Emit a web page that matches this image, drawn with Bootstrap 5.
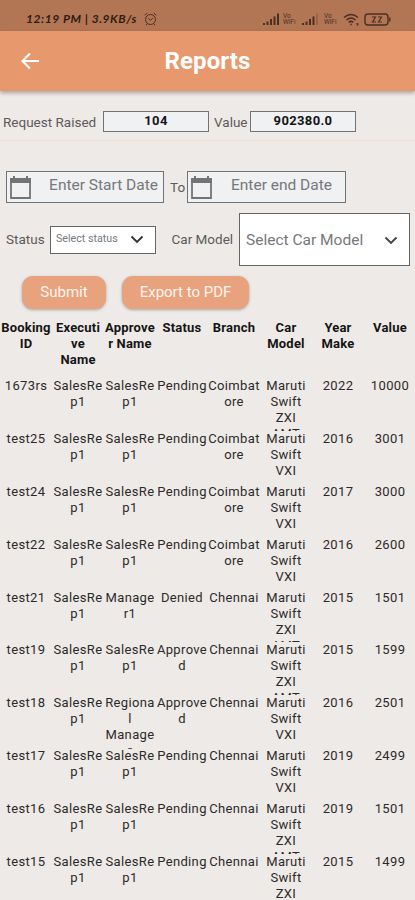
<!DOCTYPE html>
<html lang="en">
<head>
<meta charset="utf-8">
<meta name="viewport" content="width=device-width, initial-scale=1">
<title>Reports</title>
<link href="https://cdn.jsdelivr.net/npm/bootstrap@5.3.0/dist/css/bootstrap.min.css" rel="stylesheet">
<style>
body{font-family:Roboto,"Liberation Sans",sans-serif;background:#eeeae7;color:#2c2a29;overflow:hidden;height:900px}
svg{display:block;flex:none}
.statusbar{height:31px;background:#b27655;color:#4a3022;padding:7px 24px 0 26px}
.clock{font:italic 700 12px/24px Lato,sans-serif;letter-spacing:.55px;color:#2f1c13;white-space:pre;width:117px}
.vo{font-size:6.5px;line-height:6.5px;font-weight:400;width:13px}
.appbar{height:60px;background:#e8986d;box-shadow:0 2px 4px rgba(0,0,0,.3);padding-left:21px}
.appbar h1{font-size:24px;letter-spacing:.1px;padding-right:41px}
.summary{height:50px;padding:20px 0 0 3px;border-bottom:1px solid #eeddd6}
.lbl{font-size:13.5px;color:#5d5a59;white-space:nowrap}
.box{border:1px solid #707376;background:#f0f1f2}
.num{width:106px;height:21px;font-size:13px;line-height:18px;color:#151515;letter-spacing:.35px}
.dates{height:32px;margin-top:30px;padding-left:6px}
.datebox{height:32px;color:#77787a;font-size:15.5px;padding:0 5px 0 1px}
.datebox span{padding-bottom:3px}
.filters{height:53px;margin-top:10px;padding-left:6px}
.sel{border:1px solid #656565;background:#fff;color:#77787a}
.pill{height:33px;border-radius:11px;background:#e9a27e;color:#fff6f0;font-size:15px;border:0;box-shadow:0 1px 3px rgba(0,0,0,.3);padding:0}
.line{width:416px;height:52.9px;font-size:13px;line-height:16px;text-align:center;letter-spacing:.35px}
.line>div{width:52px;height:52.9px;overflow:hidden;flex:none;display:flex;justify-content:center;white-space:nowrap}
.line>div.tall{height:53.7px}
.heads{height:58px;font-weight:700;color:#151515;letter-spacing:.2px}
.reqlbl{width:100px;padding-top:1px}.vallbl{width:41px;padding:1px 0 0 5px}
.tolbl{width:23px;padding-left:6px}
.stlbl{width:44px}.carlbl{width:83px;padding-left:15.5px}
.startbox{width:158px}.endbox{width:159px;padding-right:13px}
.selstatus{width:106px;height:28px;font-size:10.7px;padding:0 11px 0 5px}
.selcar{width:171px;height:53px;font-size:15.5px;padding:2px 11px 0 6px}
.actions{padding:10px 0 11px 22px;gap:16px}
.wsub{width:84px}.wpdf{width:127px}
.heads>div{height:58px}
</style>
<script src="https://cdn.jsdelivr.net/npm/bootstrap@5.3.0/dist/js/bootstrap.bundle.min.js"></script>
</head>
<body>
<div class="statusbar d-flex align-items-center justify-content-between">
  <div class="d-flex align-items-center"><span class="clock">12:19 PM | 3.9KB/s</span>
    <svg class="ms-0" width="15" height="14" viewBox="0 0 13 14" fill="none" stroke="#4a3022"><circle cx="6.5" cy="7.5" r="5"/><path d="M.8 3.2 3.3 1M12.2 3.2 9.7 1M4.3 6.2l2.2 2 2.3-2M3 12l-1 1.3M10 12l1 1.3"/></svg>
  </div>
  <div class="d-flex align-items-center">
    <svg width="16" height="12" viewBox="0 0 16 12" fill="#4a3022"><path d="M0 10h2v2H0zM3.500 8.500h2V12h-2zM7 6h2v6H7zM10.500 3.500h2V12h-2zM14 .5h2V12h-2z"/></svg>
    <div class="vo ms-1">Vo<br>WiFi</div>
    <svg style="margin-left:6px" width="16" height="12" viewBox="0 0 16 12" fill="#4a3022"><path d="M0 10h2v2H0zM3.500 8.500h2V12h-2zM7 6h2v6H7zM10.500 3.500h2V12h-2z"/><path opacity=".25" d="M14 .5h2V12h-2z"/></svg>
    <div class="vo" style="margin-left:6px">Vo<br>WiFi</div>
    <svg style="margin-left:6px" width="17" height="13" viewBox="0 0 17 13" fill="none" stroke="#4a3022" stroke-width="1.600"><path d="M1 4.500q7-6 14 0M3.500 7q4.500-4 9 0M5.800 9.300q2.200-2 4.400 0"/><path d="M7.300 11.500h1.400M14.500 10v2.500"/></svg>
    <svg class="ms-1" width="27" height="13" viewBox="0 0 27 13" fill="none" stroke="#4a3022" stroke-width="1.400"><rect x="1" y="1" width="23" height="11" rx="3"/><path d="M25.800 4.500v4"/><path stroke-width="1.200" d="M8 4h3.500L8.500 9H12M14 4h3.500l-3 5H18"/></svg>
  </div>
</div>
<header class="appbar d-flex align-items-center position-relative">
  <svg width="20" height="18" viewBox="0 0 20 18" fill="none" stroke="#fff" stroke-width="2.100"><path d="M9 1.500 1.500 9 9 16.500M1.500 9H18"/></svg>
  <h1 class="m-0 flex-fill text-center text-white fw-bold">Reports</h1>
</header>
<section class="summary d-flex">
  <span class="lbl reqlbl">Request Raised</span><div class="box num fw-bold text-center">104</div>
  <span class="lbl vallbl">Value</span><div class="box num fw-bold text-center">902380.0</div>
</section>
<section class="dates d-flex align-items-center">
  <div class="box datebox startbox d-flex align-items-center justify-content-between">
    <svg width="24" height="26" viewBox="0 0 24 26"><path fill="none" stroke="#737476" stroke-width="1.800" d="M3 5h19v19H3z"/><path fill="#737476" d="M2 4h21v5H2zM5 2h2v4H5zM18 2h2v4h-2z"/></svg>
    <span>Enter Start Date</span></div>
  <span class="lbl tolbl">To</span>
  <div class="box datebox endbox d-flex align-items-center justify-content-between">
    <svg width="24" height="26" viewBox="0 0 24 26"><path fill="none" stroke="#737476" stroke-width="1.800" d="M3 5h19v19H3z"/><path fill="#737476" d="M2 4h21v5H2zM5 2h2v4H5zM18 2h2v4h-2z"/></svg>
    <span>Enter end Date</span></div>
</section>
<section class="filters d-flex align-items-center">
  <span class="lbl stlbl">Status</span>
  <div class="sel selstatus d-flex align-items-center justify-content-between"><span>Select status</span>
    <svg width="14" height="9" viewBox="0 0 14 9" fill="none" stroke="#333" stroke-width="1.900"><path d="m1.500 1.500 5.500 5.500 5.500-5.500"/></svg></div>
  <span class="lbl carlbl">Car Model</span>
  <div class="sel selcar d-flex align-items-center justify-content-between"><span>Select Car Model</span>
    <svg width="14" height="9" viewBox="0 0 14 9" fill="none" stroke="#444" stroke-width="1.900"><path d="m1.500 1.500 5.500 5.500 5.500-5.500"/></svg></div>
</section>
<div class="actions d-flex">
  <button class="pill wsub">Submit</button><button class="pill wpdf">Export to PDF</button>
</div>
<main>
<div class="line heads d-flex"><div>Booking<br>ID</div><div class="tall">Executi<br>ve<br>Name</div><div>Approve<br>r Name</div><div>Status</div><div>Branch</div><div>Car<br>Model</div><div>Year<br>Make</div><div>Value</div></div>
<div class="line d-flex"><div>1673rs</div><div>SalesRe<br>p1</div><div>SalesRe<br>p1</div><div>Pending</div><div>Coimbat<br>ore</div><div>Maruti<br>Swift<br>ZXI<br>AMT</div><div>2022</div><div>10000</div></div>
<div class="line d-flex"><div>test25</div><div>SalesRe<br>p1</div><div>SalesRe<br>p1</div><div>Pending</div><div>Coimbat<br>ore</div><div>Maruti<br>Swift<br>VXI</div><div>2016</div><div>3001</div></div>
<div class="line d-flex"><div>test24</div><div>SalesRe<br>p1</div><div>SalesRe<br>p1</div><div>Pending</div><div>Coimbat<br>ore</div><div>Maruti<br>Swift<br>VXI</div><div>2017</div><div>3000</div></div>
<div class="line d-flex"><div>test22</div><div>SalesRe<br>p1</div><div>SalesRe<br>p1</div><div>Pending</div><div>Coimbat<br>ore</div><div>Maruti<br>Swift<br>VXI</div><div>2016</div><div>2600</div></div>
<div class="line d-flex"><div>test21</div><div>SalesRe<br>p1</div><div>Manage<br>r1</div><div>Denied</div><div>Chennai</div><div>Maruti<br>Swift<br>ZXI<br>AMT</div><div>2015</div><div>1501</div></div>
<div class="line d-flex"><div>test19</div><div>SalesRe<br>p1</div><div>SalesRe<br>p1</div><div>Approve<br>d</div><div>Chennai</div><div>Maruti<br>Swift<br>ZXI<br>AMT</div><div>2015</div><div>1599</div></div>
<div class="line d-flex"><div>test18</div><div>SalesRe<br>p1</div><div class="tall">Regiona<br>l<br>Manage<br>r</div><div>Approve<br>d</div><div>Chennai</div><div>Maruti<br>Swift<br>VXI</div><div>2016</div><div>2501</div></div>
<div class="line d-flex"><div>test17</div><div>SalesRe<br>p1</div><div>SalesRe<br>p1</div><div>Pending</div><div>Chennai</div><div>Maruti<br>Swift<br>VXI</div><div>2019</div><div>2499</div></div>
<div class="line d-flex"><div>test16</div><div>SalesRe<br>p1</div><div>SalesRe<br>p1</div><div>Pending</div><div>Chennai</div><div>Maruti<br>Swift<br>ZXI<br>AMT</div><div>2019</div><div>1501</div></div>
<div class="line d-flex"><div>test15</div><div>SalesRe<br>p1</div><div>SalesRe<br>p1</div><div>Pending</div><div>Chennai</div><div>Maruti<br>Swift<br>ZXI</div><div>2015</div><div>1499</div></div>
</main>
</body>
</html>
